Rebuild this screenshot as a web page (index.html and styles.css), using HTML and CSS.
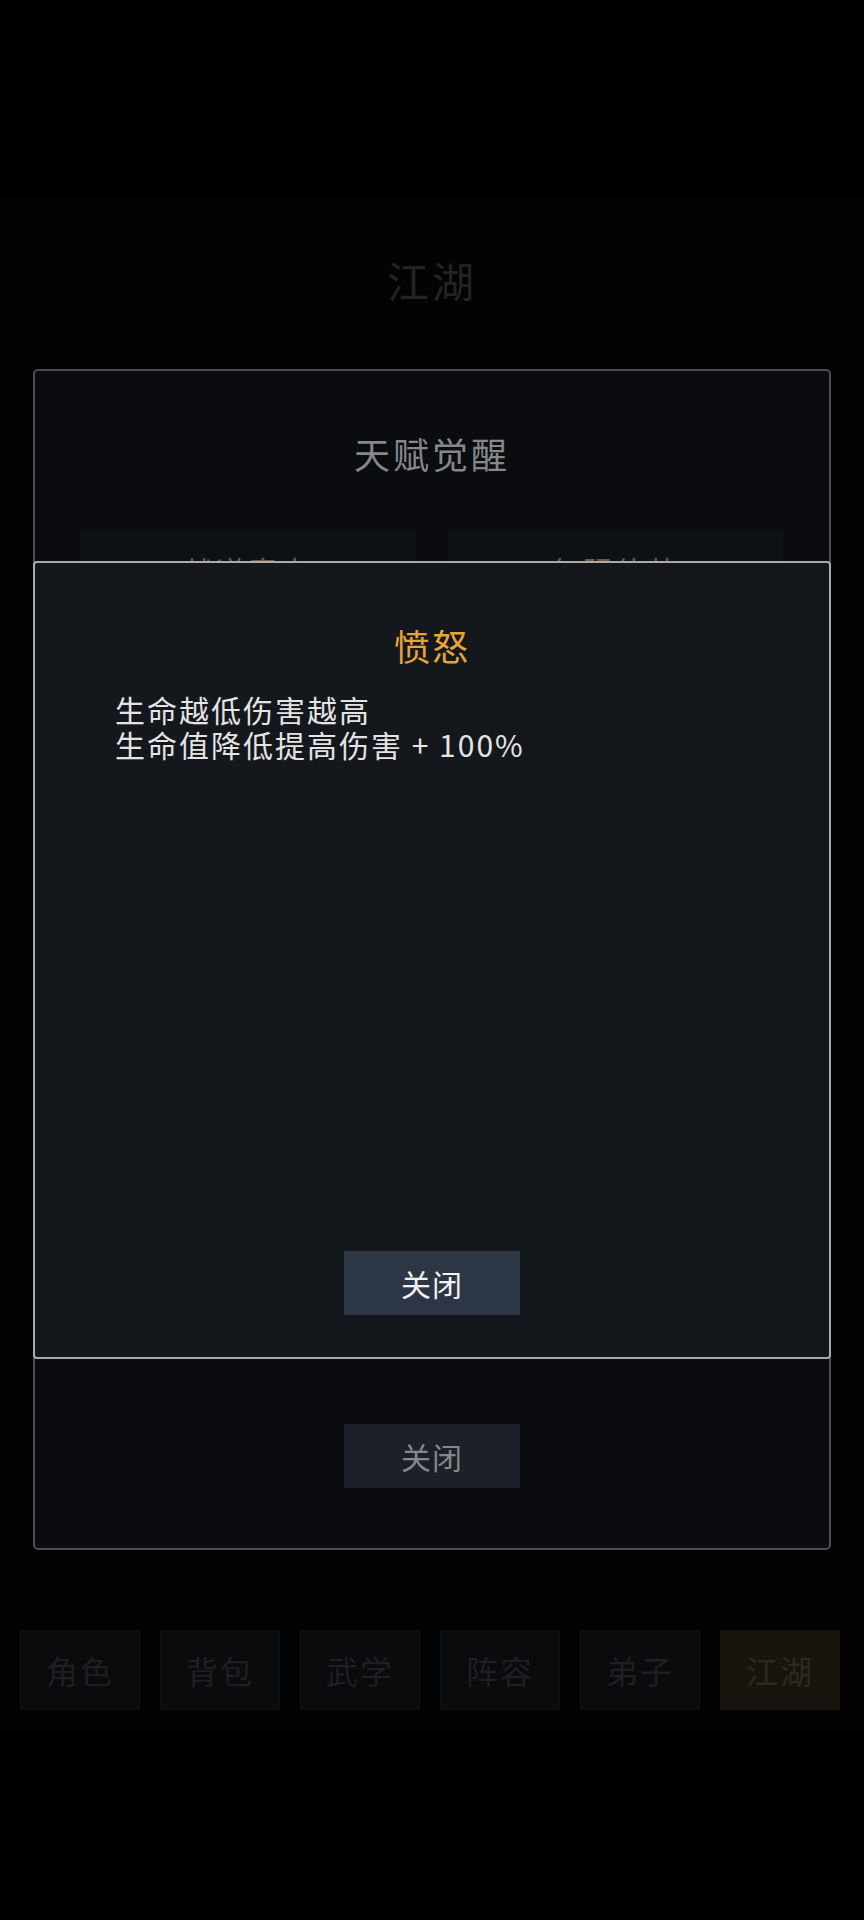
FILE: index.html
```html
<!DOCTYPE html>
<html lang="zh-CN">
<head>
<meta charset="utf-8">
<title>江湖</title>
<link rel="stylesheet" href="styles.css">
</head>
<body>
<div class="app">
  <h1 class="page-title">江湖</h1>
  <section class="modal-outer">
    <h2 class="outer-title">天赋觉醒</h2>
    <div class="talent-grid">
      <div class="talent">战道意志</div>
      <div class="talent">气强体壮</div>
    </div>
    <div class="outer-actions">
      <button class="btn btn-dim">关闭</button>
    </div>
    <div class="modal-inner">
      <h3 class="inner-title">愤怒</h3>
      <p class="desc"><span class="line">生命越低伤害越高</span><span class="line">生命值降低提高伤害 + 100%</span></p>
      <div class="inner-actions">
        <button class="btn btn-main">关闭</button>
      </div>
    </div>
  </section>
  <nav class="tabbar">
    <div class="tab">角色</div>
    <div class="tab">背包</div>
    <div class="tab">武学</div>
    <div class="tab">阵容</div>
    <div class="tab">弟子</div>
    <div class="tab tab-active">江湖</div>
  </nav>
</div>
</body>
</html>
```
FILE: styles.css
```css
html, body {
  margin: 0;
  padding: 0;
  background: #000;
  font-family: "Noto Sans CJK SC", "Noto Sans", sans-serif;
}
.app {
  margin-top: 196px;
  height: 1534px;
  background: #030303;
  display: flex;
  flex-direction: column;
}
.page-title {
  margin: 0;
  padding-top: 54px;
  height: 60px;
  line-height: 60px;
  text-align: center;
  font-size: 42px;
  font-weight: 400;
  color: #232323;
  letter-spacing: 3px;
}
.modal-outer {
  position: relative;
  margin: 59px 33px 0;
  height: 1181px;
  box-sizing: border-box;
  border: 2px solid #4c4e52;
  border-radius: 5px;
  background: #0a0c0f;
  display: flex;
  flex-direction: column;
}
.outer-title {
  margin: 57px 0 0;
  height: 50px;
  line-height: 50px;
  text-align: center;
  font-size: 36px;
  font-weight: 400;
  letter-spacing: 3px;
  color: #85878a;
}
.talent-grid {
  margin-top: 52px;
  padding: 0 46px 0 45px;
  display: grid;
  grid-template-columns: 1fr 1fr;
  gap: 32px;
}
.talent {
  height: 90px;
  background: #0d1014;
  color: #6e5a30;
  font-size: 30px;
  line-height: 80px;
  text-align: center;
  letter-spacing: 2px;
}
.outer-actions {
  margin-top: auto;
  padding-bottom: 60px;
  display: flex;
  justify-content: center;
}
.btn {
  width: 176px;
  height: 64px;
  border: none;
  border-radius: 0;
  font-family: inherit;
  font-size: 30px;
  letter-spacing: 1px;
  padding: 0;
}
.btn-dim {
  background: #1b2029;
  color: #85878a;
}
.btn-main {
  background: #2d3644;
  color: #f2f2f2;
}
.modal-inner {
  position: absolute;
  top: 190px;
  left: -2px;
  right: -2px;
  height: 798px;
  box-sizing: border-box;
  border: 2px solid #a9abad;
  border-radius: 4px;
  background: #14181d;
  display: flex;
  flex-direction: column;
}
.inner-title {
  margin: 57px 0 0;
  height: 50px;
  line-height: 50px;
  text-align: center;
  font-size: 36px;
  font-weight: 400;
  letter-spacing: 2px;
  color: #e7a43a;
}
.desc {
  margin: 22px 0 0;
  padding-left: 80px;
  font-size: 30px;
  letter-spacing: 2px;
  color: #e4e4e4;
}
.line {
  display: block;
  height: 35px;
  line-height: 35px;
}
.inner-actions {
  margin-top: auto;
  padding-bottom: 42px;
  display: flex;
  justify-content: center;
}
.tabbar {
  margin-top: 80px;
  padding-left: 20px;
  display: grid;
  grid-template-columns: repeat(6, 120px);
  gap: 20px;
}
.tab {
  height: 80px;
  box-sizing: border-box;
  border: 1px solid #0f1012;
  background: #0a0b0d;
  color: #1e1f22;
  font-size: 32px;
  line-height: 78px;
  text-align: center;
  letter-spacing: 2px;
}
.tab-active {
  background: #18140e;
  border-color: #18140e;
  color: #2e2920;
}
```
